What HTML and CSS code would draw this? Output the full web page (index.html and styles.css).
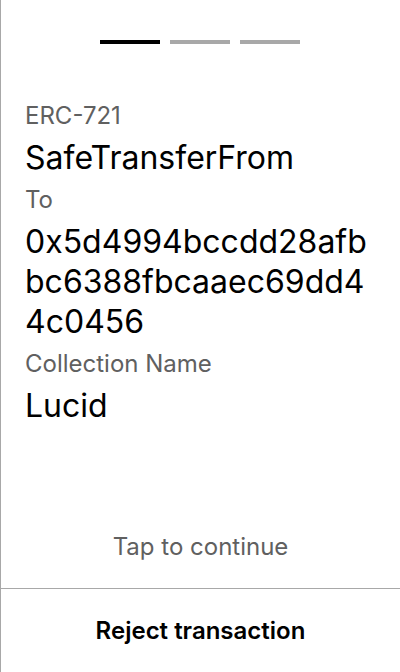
FILE: index.html
```html
<!DOCTYPE html>
<html>
<head>
<meta charset="utf-8">
<link rel="stylesheet" href="styles.css">
</head>
<body>
<div class="screen">
  <div class="progress">
    <span class="bar active"></span>
    <span class="bar"></span>
    <span class="bar"></span>
  </div>
  <div class="content">
    <div class="label">ERC-721</div>
    <div class="value">SafeTransferFrom</div>
    <div class="label">To</div>
    <div class="value address">0x5d4994bccdd28afbbc6388fbcaaec69dd44c0456</div>
    <div class="label">Collection Name</div>
    <div class="value">Lucid</div>
  </div>
  <div class="tap">Tap to continue</div>
  <div class="reject">Reject transaction</div>
</div>
</body>
</html>
```

FILE: styles.css
```css
html, body {
  margin: 0;
  padding: 0;
  background: #fff;
}
.screen {
  width: 400px;
  height: 672px;
  box-sizing: border-box;
  border-left: 1px solid #a8a8a8;
  display: flex;
  flex-direction: column;
  font-family: Inter, "Noto Sans", sans-serif;
  color: #000;
}
.progress {
  display: flex;
  justify-content: center;
  gap: 10px;
  padding-top: 40px;
  margin-left: -1px;
}
.bar {
  width: 60px;
  height: 4px;
  background: #a8a8a8;
}
.bar.active {
  background: #000;
}
.content {
  padding: 50px 24px 0 24px;
  flex: 1;
}
.label {
  font-size: 24px;
  line-height: 44px;
  color: #606060;
}
.value {
  font-size: 32px;
  line-height: 40px;
}
.address {
  word-break: break-all;
}
.tap {
  text-align: center;
  font-size: 24px;
  color: #606060;
  line-height: 30px;
  padding-bottom: 26px;
}
.reject {
  border-top: 1px solid #a8a8a8;
  height: 83px;
  display: flex;
  align-items: center;
  justify-content: center;
  font-size: 24px;
  font-weight: 600;
}
```
